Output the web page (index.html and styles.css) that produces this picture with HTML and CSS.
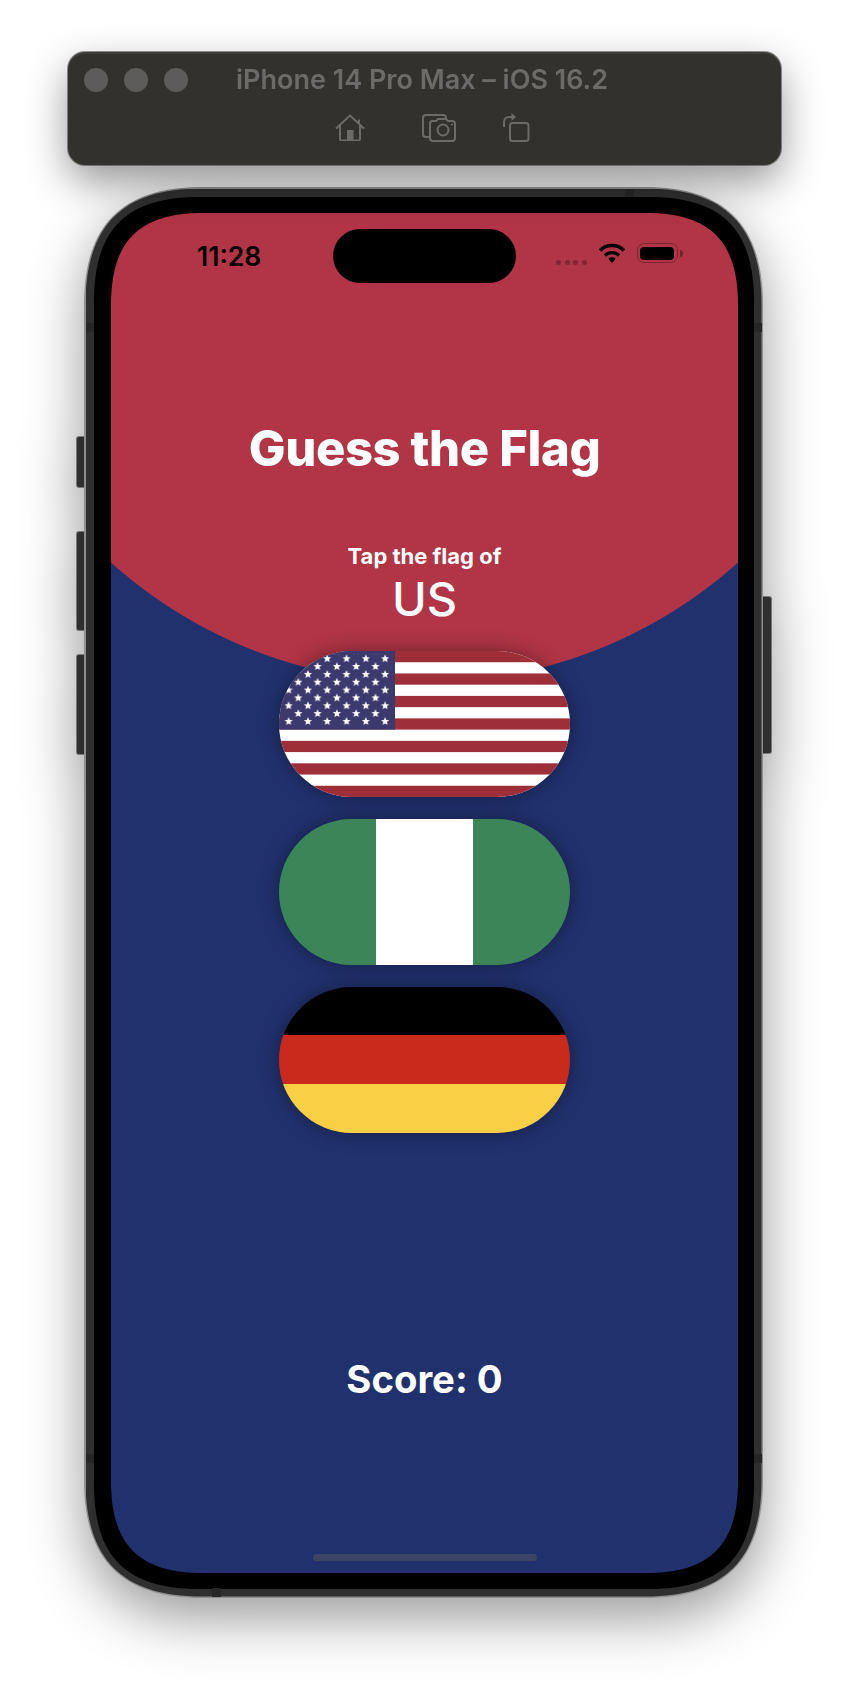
FILE: index.html
```html
<!DOCTYPE html>
<html lang="en">
<head>
<meta charset="utf-8">
<title>Guess the Flag</title>
<link rel="stylesheet" href="styles.css">
</head>
<body>
<header class="toolbar">
  <div class="toolbar-top">
    <div class="lights"><span></span><span></span><span></span></div>
    <div class="device-name">iPhone 14 Pro Max – iOS 16.2</div>
  </div>
  <div class="tools">
    <svg class="tool tool-home" viewBox="0 0 30 27"><path d="M1 14.5 15 1.5l14 13M24 5.5v4.5M5 11v14a1.5 1.5 0 0 0 1.5 1.5h17A1.5 1.5 0 0 0 25 25V11"/><rect class="solid" x="12" y="16" width="6.5" height="10"/></svg>
    <svg class="tool tool-shot" viewBox="0 0 34 28"><path d="M7 23H4a3 3 0 0 1-3-3V4a3 3 0 0 1 3-3h17a3 3 0 0 1 3 3v2"/><path d="M10 7h4l2-2h8l2 2h4a3 3 0 0 1 3 3v14a3 3 0 0 1-3 3H11a3 3 0 0 1-3-3V10a3 3 0 0 1 2-3z"/><circle cx="21" cy="16" r="5.5"/><circle class="solid" cx="30" cy="10.5" r="1"/></svg>
    <svg class="tool tool-rotate" viewBox="0 0 27 29"><rect x="7" y="10" width="18.5" height="18" rx="2.5"/><path d="M1 14V9a5 5 0 0 1 5-5h3"/><path class="solid" d="M8.5 0 13 4l-4.500 4z"/></svg>
  </div>
</header>

<main class="phone">
  <i class="key key-mute"></i><i class="key key-up"></i><i class="key key-down"></i><i class="key key-power"></i>
  <div class="rim">
    <div class="frame">
      <div class="bezel">
        <div class="screen">
          <div class="status">
            <div class="time">11:28</div>
            <div class="island"></div>
            <div class="status-right">
              <div class="signal"><span></span><span></span><span></span><span></span></div>
              <svg class="wifi" viewBox="0 0 28 20"><path class="wifi-arc" d="M2 7.5a17 17 0 0 1 24 0M7 12.5a10 10 0 0 1 14 0"/><path d="M10.3 15.7 14 20l3.7-4.3a5.5 5.5 0 0 0-7.400 0z"/></svg>
              <div class="battery"><div class="battery-fill"></div></div>
              <div class="battery-nub"></div>
            </div>
          </div>

          <h1 class="title">Guess the Flag</h1>
          <p class="prompt">Tap the flag of</p>
          <p class="country">US</p>

          <div class="flags">
            <div class="flag">
              <svg class="us-flag" viewBox="0 0 291 146" preserveAspectRatio="none">
                <defs>
                  <path id="star" d="M0-4.3 1.12-1.54 4.09-1.33 1.81.59 2.53 3.48 0 1.9-2.53 3.48-1.81.59-4.09-1.33-1.12-1.54z"/>
                  <pattern id="stars" x="4.825" y="3.3" width="19.3" height="15.68" patternUnits="userSpaceOnUse">
                    <use href="#star" x="4.825" y="4.4" fill="#fff"/>
                    <use href="#star" x="14.475" y="12.2" fill="#fff"/>
                  </pattern>
                </defs>
                <rect class="us-white" width="291" height="146"/>
                <g class="us-red">
                  <rect y="0" width="291" height="11.23"/><rect y="22.46" width="291" height="11.23"/><rect y="44.92" width="291" height="11.23"/><rect y="67.38" width="291" height="11.23"/><rect y="89.85" width="291" height="11.23"/><rect y="112.31" width="291" height="11.23"/><rect y="134.77" width="291" height="11.23"/>
                </g>
                <rect class="us-canton" width="116" height="78.6"/>
                <rect x="4.825" y="3.3" width="105.6" height="70.6" fill="url(#stars)"/>
              </svg>
            </div>
            <div class="flag flag-ng"><span></span><span></span><span></span></div>
            <div class="flag flag-de"><span></span><span></span><span></span></div>
          </div>

          <div class="score">Score: 0</div>
          <div class="home-indicator"></div>
        </div>
      </div>
    </div>
  </div>
  <i class="band band-top"></i><i class="band band-bottom"></i><i class="band band-left1"></i><i class="band band-left2"></i><i class="band band-right1"></i><i class="band band-right2"></i>
</main>
</body>
</html>
```

FILE: styles.css
```css
* { box-sizing: border-box; }
html, body { margin: 0; padding: 0; }
body {
  width: 848px;
  height: 1686px;
  overflow: hidden;
  background: #fff;
  padding: 52px 0 0 68px;
  font-family: Inter, "Liberation Sans", sans-serif;
}

/* Simulator toolbar */
.toolbar {
  width: 713px;
  height: 113px;
  background: #33312d;
  border-radius: 17px;
  box-shadow: 0 0 0 1px rgba(60,60,60,.55), inset 0 2px 0 rgba(255,255,255,.06), 0 16px 40px rgba(0,0,0,.42);
  padding: 16px 0 0 16px;
  position: relative;
  z-index: 2;
}
.toolbar-top { display: flex; align-items: center; height: 24px; }
.lights { display: flex; gap: 16px; }
.lights span { width: 24px; height: 24px; border-radius: 50%; background: #5d5c5a; }
.device-name {
  margin-left: 48px;
  margin-top: -2px;
  color: #6c6b69;
  font-size: 27px;
  font-weight: 600;
  white-space: nowrap;
}
.tools { display: flex; align-items: flex-start; margin: 21px 0 0 251px; }
.tool { fill: none; stroke: #6c6b69; stroke-width: 2; display: block; }
.tool .solid { fill: #6c6b69; stroke: none; }
.tool-home { width: 30px; height: 27px; margin-top: 1px; }
.tool-shot { width: 34px; height: 28px; margin: 1px 0 0 57px; }
.tool-rotate { width: 27px; height: 29px; margin-left: 47px; }

/* Phone: continuous-curve corners are cut with clip-path, one layer per ring */
.phone {
  position: relative;
  width: 679px;
  height: 1411px;
  margin: 22px 0 0 16px;
  filter: drop-shadow(0 20px 28px rgba(0,0,0,.4));
}
.rim {
  width: 679px;
  height: 1411px;
  padding: 1.5px;
  background: #8f8f8f;
  clip-path: path("M118 0H561C641 0 679 38 679 118V1293C679 1373 641 1411 561 1411H118C38 1411 0 1373 0 1293V118C0 38 38 0 118 0Z");
}
.frame {
  width: 676px;
  height: 1408px;
  padding: 8.5px 7.5px 7.5px 8.5px;
  background: #2f2f2f;
  clip-path: path("M116 0H560C639 0 676 37 676 116V1292C676 1371 639 1408 560 1408H116C37 1408 0 1371 0 1292V116C0 37 37 0 116 0Z");
}
.bezel {
  width: 660px;
  height: 1392px;
  padding: 16px 16px 16px 17px;
  background: #000;
  clip-path: path("M105 0H555C628 0 660 32 660 105V1287C660 1360 628 1392 555 1392H105C32 1392 0 1360 0 1287V105C0 32 32 0 105 0Z");
}
.screen {
  width: 627px;
  height: 1360px;
  display: flex;
  flex-direction: column;
  align-items: center;
  background: radial-gradient(circle 470px at 50% 0, #b13546 99.8%, #21316e 100%);
  clip-path: path("M92 0H535C599 0 627 28 627 92V1268C627 1332 599 1360 535 1360H92C28 1360 0 1332 0 1268V92C0 28 28 0 92 0Z");
}
.band { position: absolute; background: #262626; }
.band-top { top: 1.5px; left: 541px; width: 9px; height: 8.5px; }
.band-bottom { bottom: 1.5px; left: 128px; width: 9px; height: 8.5px; }
.band-left1 { left: 1.5px; top: 136px; width: 8.5px; height: 9px; }
.band-left2 { left: 1.5px; top: 1267px; width: 8.5px; height: 9px; }
.band-right1 { right: 1.5px; top: 136px; width: 8px; height: 9px; }
.band-right2 { right: 1.5px; top: 1267px; width: 8px; height: 9px; }
.key {
  position: absolute;
  width: 8px;
  background: #2f2f2f;
  box-shadow: 0 0 0 1px #777;
}
.key-mute { left: -7px; top: 250px; height: 50px; border-radius: 2px 0 0 2px; }
.key-up { left: -7px; top: 345px; height: 98px; border-radius: 2px 0 0 2px; }
.key-down { left: -7px; top: 468px; height: 99px; border-radius: 2px 0 0 2px; }
.key-power { right: -8px; top: 410px; height: 156px; border-radius: 0 2px 2px 0; }

/* Status bar */
.status {
  width: 100%;
  display: grid;
  grid-template-columns: 1fr 183px 1fr;
  padding-top: 16px;
  flex: none;
}
.time {
  padding: 12px 0 0 86px;
  font-size: 26.5px;
  font-weight: 600;
  line-height: 30px;
  color: #000;
}
.island { height: 54px; width: 183px; border-radius: 27px; background: #000; }
.status-right { display: flex; align-items: flex-start; padding: 14px 0 0 40px; }
.signal { display: flex; gap: 3.5px; margin-top: 16.5px; }
.signal span { width: 5px; height: 5px; border-radius: 50%; background: rgba(0,0,0,.28); }
.wifi { width: 28px; height: 20px; margin-left: 11px; fill: #000; }
.wifi .wifi-arc { fill: none; stroke: #000; stroke-width: 3.4; }
.battery {
  width: 41px;
  height: 20px;
  margin-left: 11px;
  padding: 2.5px;
  border: 1.5px solid rgba(0,0,0,.3);
  border-radius: 7px;
}
.battery-fill { height: 100%; border-radius: 4px; background: #000; }
.battery-nub {
  width: 3px;
  height: 7px;
  margin: 6.5px 0 0 2px;
  border-radius: 0 3px 3px 0;
  background: rgba(0,0,0,.35);
}

/* Game */
.title {
  margin: 138px 0 0;
  color: #fff;
  font-size: 49px;
  font-weight: 800;
  letter-spacing: -.4px;
  line-height: 56px;
}
.prompt {
  margin: 66px 0 0;
  color: #fff;
  font-size: 22px;
  font-weight: 700;
  line-height: 26px;
}
.country {
  margin: 2px 0 0;
  color: #fff;
  font-size: 47px;
  font-weight: 500;
  line-height: 56px;
}
.flags {
  display: flex;
  flex-direction: column;
  gap: 21.7px;
  margin-top: 24.4px;
}
.flag {
  width: 291px;
  height: 146px;
  border-radius: 73px;
  overflow: hidden;
  display: flex;
  box-shadow: 0 0 20px rgba(0,0,0,.38);
}
.us-flag { display: block; width: 100%; height: 100%; }
.us-white { fill: #fff; }
.us-red { fill: #9e2e38; }
.us-canton { fill: #3c3a6c; }
.flag-ng span { flex: 1; background: #3b8559; }
.flag-ng span:nth-child(2) { background: #fff; }
.flag-de { flex-direction: column; }
.flag-de span { flex: 1; background: #000; }
.flag-de span:nth-child(2) { background: #c92a1c; }
.flag-de span:nth-child(3) { background: #f8cf45; }

.score {
  margin-top: 221px;
  color: #fff;
  font-size: 38.3px;
  font-weight: 700;
  line-height: 50px;
}
.home-indicator {
  margin-top: auto;
  margin-bottom: 12px;
  width: 224px;
  height: 7px;
  border-radius: 4px;
  background: #3c4566;
}
```
